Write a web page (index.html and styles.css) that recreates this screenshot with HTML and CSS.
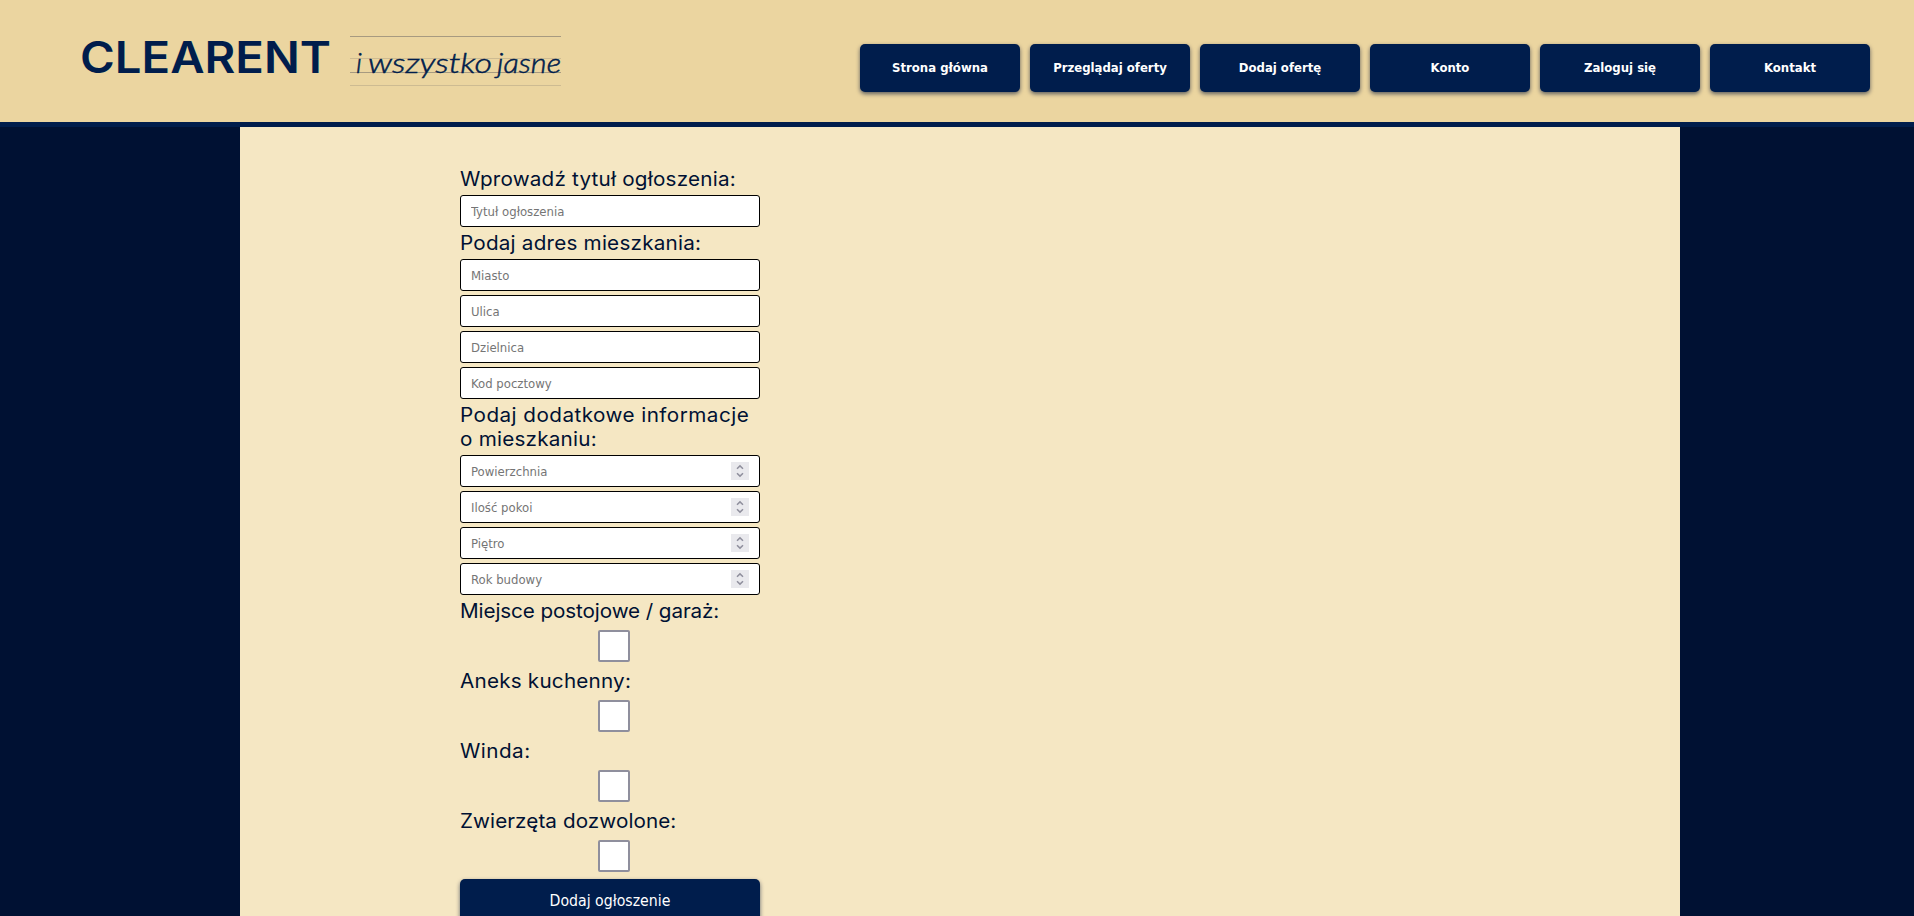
FILE: index.html
```html
<!DOCTYPE html>
<html lang="pl">
<head>
<meta charset="utf-8">
<title>Clearent</title>
<link rel="stylesheet" href="styles.css">
</head>
<body>
<header class="header">
  <svg class="logo" width="500" height="70" viewBox="0 0 500 70">
    <g class="rules">
      <path class="strong" d="M270 11.5H481"/>
      <path class="faint" d="M270 33.5H481"/>
      <path class="strong" d="M270 47.5H481"/>
      <path class="faint" d="M270 60.5H481"/>
    </g>
    <text class="brand" x="0" y="48" textLength="251" lengthAdjust="spacingAndGlyphs">CLEARENT</text>
    <g class="tagline">
      <text x="276" y="48">i</text>
      <text x="288" y="48" textLength="124" lengthAdjust="spacingAndGlyphs">wszystko</text>
      <text x="417" y="48" textLength="64" lengthAdjust="spacingAndGlyphs">jasne</text>
    </g>
  </svg>
  <nav class="nav">
    <a class="nav-link">Strona główna</a>
    <a class="nav-link">Przeglądaj oferty</a>
    <a class="nav-link">Dodaj ofertę</a>
    <a class="nav-link">Konto</a>
    <a class="nav-link">Zaloguj się</a>
    <a class="nav-link">Kontakt</a>
  </nav>
</header>
<main class="main">
  <form class="form">
    <label class="label">Wprowadź tytuł ogłoszenia:</label>
    <input class="field" type="text" placeholder="Tytuł ogłoszenia">
    <label class="label">Podaj adres mieszkania:</label>
    <input class="field" type="text" placeholder="Miasto">
    <input class="field" type="text" placeholder="Ulica">
    <input class="field" type="text" placeholder="Dzielnica">
    <input class="field" type="text" placeholder="Kod pocztowy">
    <label class="label"><span class="loose">Podaj dodatkowe informacje</span><br>o mieszkaniu:</label>
    <div class="field number"><input type="text" placeholder="Powierzchnia"><svg class="spin" viewBox="0 0 18 18"><path d="M6 6.7 9 3.9 12 6.7M6 11.3 9 14.1 12 11.3"/></svg></div>
    <div class="field number"><input type="text" placeholder="Ilość pokoi"><svg class="spin" viewBox="0 0 18 18"><path d="M6 6.7 9 3.9 12 6.7M6 11.3 9 14.1 12 11.3"/></svg></div>
    <div class="field number"><input type="text" placeholder="Piętro"><svg class="spin" viewBox="0 0 18 18"><path d="M6 6.7 9 3.9 12 6.7M6 11.3 9 14.1 12 11.3"/></svg></div>
    <div class="field number"><input type="text" placeholder="Rok budowy"><svg class="spin" viewBox="0 0 18 18"><path d="M6 6.7 9 3.9 12 6.7M6 11.3 9 14.1 12 11.3"/></svg></div>
    <label class="label tight">Miejsce postojowe / garaż:</label>
    <input class="check" type="checkbox">
    <label class="label">Aneks kuchenny:</label>
    <input class="check" type="checkbox">
    <label class="label loose">Winda:</label>
    <input class="check" type="checkbox">
    <label class="label snug">Zwierzęta dozwolone:</label>
    <input class="check" type="checkbox">
    <button class="submit" type="button">Dodaj ogłoszenie</button>
  </form>
</main>
</body>
</html>
```
FILE: styles.css
```css
* { box-sizing: border-box; }
html, body { height: 100%; }
body {
  margin: 0;
  overflow: hidden;
  background: #001133;
  font-family: "DejaVu Sans Condensed", "DejaVu Sans", sans-serif;
  font-stretch: condensed;
}
.header {
  display: flex;
  justify-content: space-between;
  align-items: flex-start;
  height: 127px;
  padding: 25px 44px 0 80px;
  background: #ebd5a0;
  border-bottom: 5px solid #001d4c;
}
.logo { display: block; fill: #001d4c; }
.brand { font: 600 43.5px Inter, sans-serif; }
.tagline { font: italic 300 28px Lato, sans-serif; stroke: #001d4c; stroke-width: 0.5px; }
.rules { fill: none; stroke-width: 1; }
.strong { stroke: #a79a80; }
.faint { stroke: #cdbb92; }
.nav { display: flex; gap: 10px; padding-top: 19px; }
.nav-link {
  width: 160px;
  height: 48px;
  border-radius: 5px;
  background: #001d4c;
  box-shadow: 0 2px 4px rgba(0, 17, 51, 0.6);
  color: #fff;
  font-size: 13px;
  font-weight: 700;
  line-height: 48px;
  text-align: center;
}
.main {
  width: 1440px;
  height: 789px;
  margin-left: 240px;
  padding: 40px 0 0 220px;
  background: #f5e7c3;
  overflow: hidden;
}
.form { display: flex; flex-direction: column; gap: 4px; width: 300px; }
.label {
  color: #001133;
  font: 400 19.5px/24px Inter, sans-serif;
  letter-spacing: 0.2px;
  white-space: nowrap;
  transform: scaleX(1.06);
  transform-origin: left;
}
.loose { letter-spacing: 0.43px; }
.snug { letter-spacing: 0.07px; }
.tight { letter-spacing: -0.1px; }
.field {
  width: 300px;
  height: 32px;
  margin: 0;
  padding: 0 10px;
  border: 1px solid #000;
  border-radius: 3px;
  background: #fff;
  font: 13px "DejaVu Sans Condensed", "DejaVu Sans", sans-serif;
  font-stretch: condensed;
  outline: 0;
}
.field::placeholder, .number input::placeholder { color: #757575; opacity: 1; }
.number { display: flex; align-items: center; }
.number input {
  flex: 1;
  min-width: 0;
  padding: 0;
  border: 0;
  background: none;
  font: inherit;
}
.spin {
  width: 18px;
  height: 18px;
  background: #e9e9ed;
  fill: none;
  stroke: #8f8f9d;
  stroke-width: 1.5;
}
.check {
  appearance: none;
  width: 32px;
  height: 32px;
  margin: 3px 0 3px 138px;
  border: 2px solid #8f8f9d;
  border-radius: 2px;
  background: #fff;
}
.submit {
  height: 42px;
  border: 0;
  border-radius: 5px;
  background: #001d4c;
  box-shadow: 0 2px 4px rgba(0, 17, 51, 0.6);
  color: #fff;
  font: 15.7px "DejaVu Sans Condensed", "DejaVu Sans", sans-serif;
  font-stretch: condensed;
}
```
